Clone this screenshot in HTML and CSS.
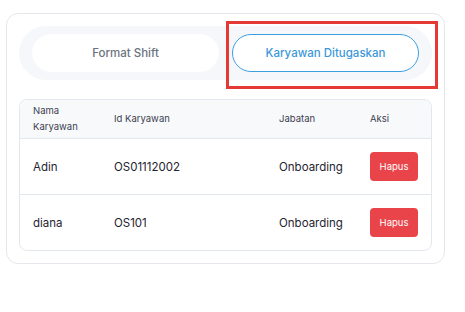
FILE: index.html
```html
<!DOCTYPE html>
<html lang="id">
<head>
    <meta charset="UTF-8">
    <meta name="viewport" content="width=device-width, initial-scale=1.0">
    <title>Karyawan Ditugaskan</title>
    <link rel="stylesheet" href="styles.css">
</head>
<body>

<div class="card">
    <div class="tabs">
        <button class="tab">Format Shift</button>
        <button class="tab active">Karyawan Ditugaskan</button>
        <div class="highlight"></div>
    </div>

    <div class="table">
        <div class="row head">
            <div class="cell name-head">Nama Karyawan</div>
            <div class="cell">Id Karyawan</div>
            <div class="cell">Jabatan</div>
            <div class="cell">Aksi</div>
        </div>
        <div class="row">
            <div class="cell">Adin</div>
            <div class="cell">OS01112002</div>
            <div class="cell">Onboarding</div>
            <div class="cell"><button class="btn-delete">Hapus</button></div>
        </div>
        <div class="row">
            <div class="cell">diana</div>
            <div class="cell">OS101</div>
            <div class="cell">Onboarding</div>
            <div class="cell"><button class="btn-delete">Hapus</button></div>
        </div>
    </div>
</div>

</body>
</html>
```

FILE: styles.css
```css
body {
    font-family: Inter, "Noto Sans", sans-serif;
    background-color: #ffffff;
    margin: 0;
    padding: 13px 0 0 6px;
    color: #1f2330;
}

.card {
    width: 413px;
    height: 237px;
    padding: 12px 12px 0 12px;
    border: 1px solid #e4e7ec;
    border-radius: 12px;
}

.tabs {
    position: relative;
    display: flex;
    gap: 13px;
    padding: 8px 13px;
    background-color: #f5f7fa;
    border-radius: 27px;
}

.tab {
    flex: 1;
    height: 38px;
    background-color: #ffffff;
    border: 1px solid #ffffff;
    border-radius: 19px;
    font-family: inherit;
    font-size: 11.5px;
    font-weight: 500;
    color: #6b7280;
    cursor: pointer;
}

.tab.active {
    border-color: #3d9fe2;
    color: #3a98da;
}

.highlight {
    position: absolute;
    left: 207px;
    top: -5px;
    width: 206px;
    height: 62px;
    border: 3px solid #e53935;
}

.table {
    margin-top: 19px;
    border: 1px solid #e3e7ee;
    border-radius: 8px;
    overflow: hidden;
}

.row {
    display: grid;
    grid-template-columns: 81px 165px 91px 1fr;
    align-items: center;
    padding-left: 13px;
    height: 55px;
    border-top: 1px solid #e3e7ee;
    font-size: 11.5px;
}

.row.head {
    height: 38px;
    border-top: none;
    background-color: #f8f9fb;
    font-size: 9.5px;
    line-height: 16px;
    color: #3b4150;
}

.name-head {
    width: 52px;
}

.btn-delete {
    width: 48px;
    height: 29px;
    background-color: #e8444a;
    color: #ffffff;
    border: none;
    border-radius: 4px;
    font-family: inherit;
    font-size: 9.5px;
    cursor: pointer;
}
```
